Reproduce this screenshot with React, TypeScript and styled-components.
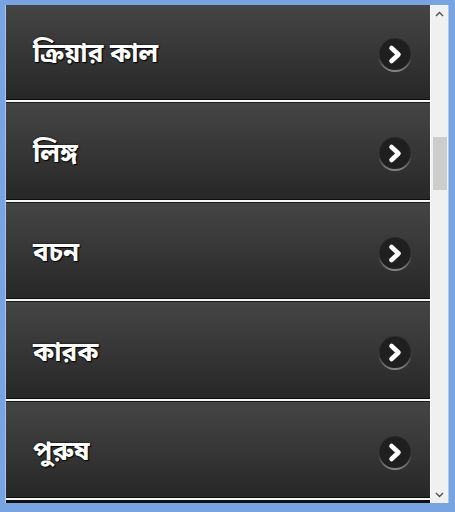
import React from 'react';
import styled, { createGlobalStyle } from 'styled-components';

const GlobalStyle = createGlobalStyle`
  html, body {
    margin: 0;
    padding: 0;
    background: #ffffff;
  }
  body {
    font-family: "Noto Sans", "DejaVu Sans", sans-serif;
  }
`;

const items = ['ক্রিয়ার কাল', 'লিঙ্গ', 'বচন', 'কারক', 'পুরুষ'];

const Frame = styled.div`
  box-sizing: border-box;
  width: 455px;
  height: 512px;
  background: #78a4e2;
  padding: 5px 7px 9px 6px;
  display: flex;
`;

const Viewport = styled.div`
  flex: 1;
  display: flex;
  overflow: hidden;
  box-shadow: -1px 0 0 #a8c6f0, 1px 0 0 #a8c6f0;
`;

// list is scrolled a couple of pixels down, so the first row is clipped at the top
const List = styled.ul`
  list-style: none;
  margin: -2.5px 0 0;
  padding: 0;
  flex: 1;
  display: flex;
  flex-direction: column;
  background: #111;
`;

const Item = styled.li`
  box-sizing: border-box;
  height: 97.5px;
  flex-shrink: 0;
  display: flex;
  align-items: center;
  justify-content: space-between;
  padding: 7px 17px 0 27px;
  background: linear-gradient(to bottom, #454545 0%, #383838 45%, #272727 100%);
  border-top: 1px solid #1a1a1a;
  border-bottom: 1px solid #0c0c0c;
  box-shadow: 0 2px 0 #f4f4f4;
  margin-bottom: 2px;
`;

const Label = styled.span`
  color: #ffffff;
  font-family: "Noto Sans Bengali", "Lohit Bengali", "FreeSans", "Noto Sans", sans-serif;
  font-size: 26px;
  font-weight: bold;
  text-shadow: 1px 1px 1px #000, 0 0 2px #000;
  margin-top: 2px;
`;

const ScrollBar = styled.div`
  width: 17px;
  flex-shrink: 0;
  background: #f0f0f0;
  border-left: 1px solid #fafafa;
  display: flex;
  flex-direction: column;
  align-items: center;
`;

const ArrowButton = styled.div`
  width: 16px;
  height: 17px;
  display: flex;
  align-items: center;
  justify-content: center;
`;

const Track = styled.div`
  flex: 1;
  width: 100%;
  padding-top: 115px;
  box-sizing: border-box;
  display: flex;
  justify-content: center;
`;

const Thumb = styled.div`
  width: 14px;
  height: 53px;
  background: #cdcdcd;
`;

const ChevronCircle: React.FC = () => (
  <svg width="36" height="36" viewBox="0 0 36 36">
    <defs>
      <linearGradient id="ring" x1="0" y1="0" x2="0" y2="1">
        <stop offset="0" stopColor="#2a2a2a" />
        <stop offset="0.6" stopColor="#3a3a3a" />
        <stop offset="1" stopColor="#8a8a8a" />
      </linearGradient>
    </defs>
    <circle cx="18" cy="18" r="17" fill="url(#ring)" />
    <circle cx="18" cy="17.5" r="15.5" fill="#1f1f1f" />
    <polyline
      points="14.5,11 21.5,17.5 14.5,24"
      fill="none"
      stroke="#ffffff"
      strokeWidth="4.6"
      strokeLinecap="round"
      strokeLinejoin="round"
    />
  </svg>
);

const SmallArrow: React.FC<{ up?: boolean }> = ({ up }) => (
  <svg width="9" height="6" viewBox="0 0 9 6">
    <polyline
      points={up ? '1,5 4.5,1.5 8,5' : '1,1 4.5,4.5 8,1'}
      fill="none"
      stroke="#505050"
      strokeWidth="1.4"
    />
  </svg>
);

export default function App() {
  return (
    <>
      <GlobalStyle />
      <Frame>
        <Viewport>
          <List>
            {items.map((label) => (
              <Item key={label}>
                <Label>{label}</Label>
                <ChevronCircle />
              </Item>
            ))}
          </List>
          <ScrollBar>
            <ArrowButton>
              <SmallArrow up />
            </ArrowButton>
            <Track>
              <Thumb />
            </Track>
            <ArrowButton>
              <SmallArrow />
            </ArrowButton>
          </ScrollBar>
        </Viewport>
      </Frame>
    </>
  );
}
